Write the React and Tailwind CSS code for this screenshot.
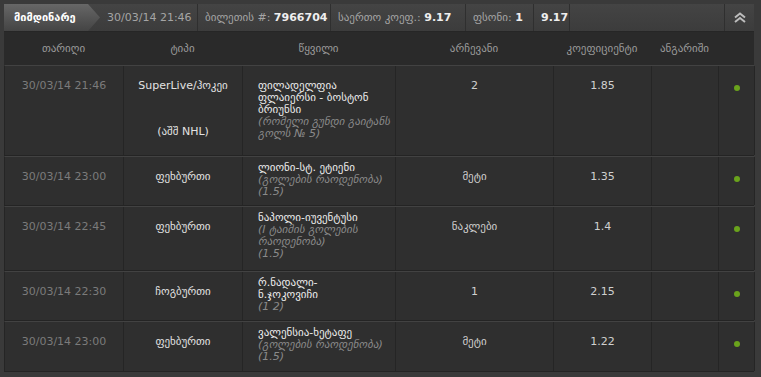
import React from 'react';

const rows = [
  {
    date: '30/03/14 21:46',
    type: ['SuperLive/ჰოკეი', '(აშშ NHL)'],
    name: ['ფილადელფია', 'ფლაიერსი - ბოსტონ', 'ბრიუნსი'],
    note: ['(რომელი გუნდი გაიტანს', 'გოლს № 5)'],
    pick: '2',
    odds: '1.85',
    h: 'h-[91px]',
    evPad: 'pt-[14px]',
  },
  {
    date: '30/03/14 23:00',
    type: ['ფეხბურთი'],
    name: ['ლიონი-სტ. ეტიენი'],
    note: ['(გოლების რაოდენობა)', '(1.5)'],
    pick: 'მეტი',
    odds: '1.35',
    h: 'h-[50px]',
    evPad: 'pt-[5px]',
  },
  {
    date: '30/03/14 22:45',
    type: ['ფეხბურთი'],
    name: ['ნაპოლი-იუვენტუსი'],
    note: ['(I ტაიმის გოლების', 'რაოდენობა)', '(1.5)'],
    pick: 'ნაკლები',
    odds: '1.4',
    h: 'h-[65px]',
    evPad: 'pt-[5px]',
  },
  {
    date: '30/03/14 22:30',
    type: ['ჩოგბურთი'],
    name: ['რ.ნადალი-', 'ნ.ჯოკოვიჩი'],
    note: ['(1 2)'],
    pick: '1',
    odds: '2.15',
    h: 'h-[50px]',
    evPad: 'pt-[5px]',
  },
  {
    date: '30/03/14 23:00',
    type: ['ფეხბურთი'],
    name: ['ვალენსია-ხეტაფე'],
    note: ['(გოლების რაოდენობა)', '(1.5)'],
    pick: 'მეტი',
    odds: '1.22',
    h: 'h-[51px]',
    evPad: 'pt-[5px]',
  },
];

const cols = 'grid grid-cols-[119px_119px_153px_158px_98px_67px_36px]';
const cell = 'border-r border-[#252525] pt-[14px] text-center';

const DoubleUp = () => (
  <svg width="12" height="11" viewBox="0 0 12 11" fill="none" stroke="#bdbdbd" strokeWidth="2">
    <polyline points="1,5.5 6,1.5 11,5.5" />
    <polyline points="1,10 6,6 11,10" />
  </svg>
);

export default function App() {
  return (
    <div className="h-[377px] w-[761px] bg-[#3a3a3a] p-[4px] font-['DejaVu_Sans',sans-serif] text-[11px] leading-[12px]">
      <div className="w-[750px]">
        {/* top summary bar */}
        <div className="flex h-[28px] items-stretch bg-linear-to-b from-[#444444] to-[#3c3c3c] border-b border-[#262626]">
          <div className="flex w-[96px] items-center bg-linear-to-b from-[#676767] to-[#444444] pl-[10px] font-bold text-white [clip-path:polygon(0_0,84px_0,96px_50%,84px_100%,0_100%)]">
            მიმდინარე
          </div>
          <div className="flex w-[97px] items-center pl-[7px] text-[#a5a5a5]">30/03/14 21:46</div>
          <div className="flex w-[133px] items-center border-l border-[#2f2f2f] pl-[7px] text-[#a5a5a5]">
            ბილეთის #:&nbsp;<span className="font-bold text-[#eeeeee]">7966704</span>
          </div>
          <div className="flex w-[135px] items-center border-l border-[#2f2f2f] pl-[7px] text-[#a5a5a5]">
            საერთო კოეფ.:&nbsp;<span className="font-bold text-[#eeeeee]">9.17</span>
          </div>
          <div className="flex w-[68px] items-center border-l border-[#2f2f2f] pl-[7px] text-[#a5a5a5]">
            ფსონი:&nbsp;<span className="font-bold text-[#eeeeee]">1</span>
          </div>
          <div className="flex w-[36px] items-center border-l border-[#2f2f2f] pl-[7px] font-bold text-[#eeeeee]">9.17</div>
          <div className="flex-1 border-l border-[#2f2f2f]"></div>
          <div className="flex w-[30px] items-center justify-center border-l border-[#2f2f2f]">
            <DoubleUp />
          </div>
        </div>

        {/* column headers */}
        <div className={`${cols} h-[33px] items-center bg-[#2a2a2a] text-center text-[#9a9a9a]`}>
          <div>თარიღი</div>
          <div>ტიპი</div>
          <div>წყვილი</div>
          <div>არჩევანი</div>
          <div>კოეფიციენტი</div>
          <div>ანგარიში</div>
          <div></div>
        </div>

        {/* bet rows */}
        {rows.map((r, i) => (
          <div
            key={i}
            className={`${cols} ${r.h} border-t border-b border-t-[#424242] border-b-[#242424] border-l border-l-[#252525] bg-[#2f2f2f]`}
          >
            <div className={`${cell} text-[#7b7b7b]`}>{r.date}</div>
            <div className={`${cell} text-[#e2e2e2]`}>
              <div>{r.type[0]}</div>
              {r.type[1] && <div className="mt-[34px]">{r.type[1]}</div>}
            </div>
            <div className={`border-r border-[#252525] pl-[15px] whitespace-nowrap ${r.evPad}`}>
              {r.name.map((n) => (
                <div key={n} className="text-[#ececec]">{n}</div>
              ))}
              {r.note.map((n) => (
                <div key={n} className="italic text-[#8a8a8a]">{n}</div>
              ))}
            </div>
            <div className={`${cell} text-[#d0d0d0]`}>{r.pick}</div>
            <div className={`${cell} text-[#d0d0d0]`}>{r.odds}</div>
            <div className={cell}></div>
            <div className="flex justify-center border-r border-[#252525] pt-[19px]">
              <div className="h-[6px] w-[6px] rounded-full bg-[#6aa31c]"></div>
            </div>
          </div>
        ))}
      </div>
    </div>
  );
}
